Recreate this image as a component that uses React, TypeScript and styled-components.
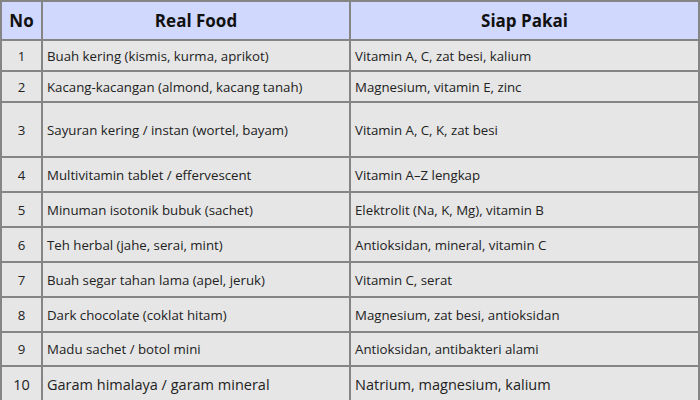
import styled, { createGlobalStyle } from "styled-components";

const GlobalStyle = createGlobalStyle`
  html, body {
    margin: 0;
    padding: 0;
    background: #ffffff;
  }
  body {
    font-family: "Open Sans", "Liberation Sans", sans-serif;
    color: #222222;
  }
`;

const Table = styled.table`
  width: 700px;
  border-collapse: collapse;
  table-layout: fixed;
  background: #e6e6e6;
`;

const HeadCell = styled.th<{ $width?: number }>`
  width: ${(p) => (p.$width ? `${p.$width}px` : "auto")};
  height: 37px;
  padding: 0;
  background: #d0d8fd;
  border: 2px solid #858585;
  font-size: 17px;
  font-weight: 700;
  color: #111111;
  text-align: center;
`;

const Row = styled.tr<{ $height: number }>`
  height: ${(p) => p.$height}px;
`;

const NumCell = styled.td<{ $large?: boolean }>`
  padding: 0;
  border: 2px solid #858585;
  text-align: center;
  font-size: ${(p) => (p.$large ? "14.5px" : "13.25px")};
  color: #222222;
`;

const TextCell = styled.td<{ $large?: boolean }>`
  padding: 0 4px;
  border: 2px solid #858585;
  font-size: ${(p) => (p.$large ? "14.5px" : "13.25px")};
  color: #222222;
`;

const rows = [
  { food: "Buah kering (kismis, kurma, aprikot)", ready: "Vitamin A, C, zat besi, kalium", h: 31 },
  { food: "Kacang-kacangan (almond, kacang tanah)", ready: "Magnesium, vitamin E, zinc", h: 31 },
  { food: "Sayuran kering / instan (wortel, bayam)", ready: "Vitamin A, C, K, zat besi", h: 55 },
  { food: "Multivitamin tablet / effervescent", ready: "Vitamin A–Z lengkap", h: 35 },
  { food: "Minuman isotonik bubuk (sachet)", ready: "Elektrolit (Na, K, Mg), vitamin B", h: 35 },
  { food: "Teh herbal (jahe, serai, mint)", ready: "Antioksidan, mineral, vitamin C", h: 35 },
  { food: "Buah segar tahan lama (apel, jeruk)", ready: "Vitamin C, serat", h: 35 },
  { food: "Dark chocolate (coklat hitam)", ready: "Magnesium, zat besi, antioksidan", h: 35 },
  { food: "Madu sachet / botol mini", ready: "Antioksidan, antibakteri alami", h: 34 },
  { food: "Garam himalaya / garam mineral", ready: "Natrium, magnesium, kalium", h: 36, large: true },
];

export default function App() {
  return (
    <>
      <GlobalStyle />
      <Table>
        <thead>
          <tr>
            <HeadCell $width={39}>No</HeadCell>
            <HeadCell $width={306}>Real Food</HeadCell>
            <HeadCell>Siap Pakai</HeadCell>
          </tr>
        </thead>
        <tbody>
          {rows.map((r, i) => (
            <Row key={i} $height={r.h}>
              <NumCell $large={r.large}>{i + 1}</NumCell>
              <TextCell $large={r.large}>{r.food}</TextCell>
              <TextCell $large={r.large}>{r.ready}</TextCell>
            </Row>
          ))}
        </tbody>
      </Table>
    </>
  );
}
